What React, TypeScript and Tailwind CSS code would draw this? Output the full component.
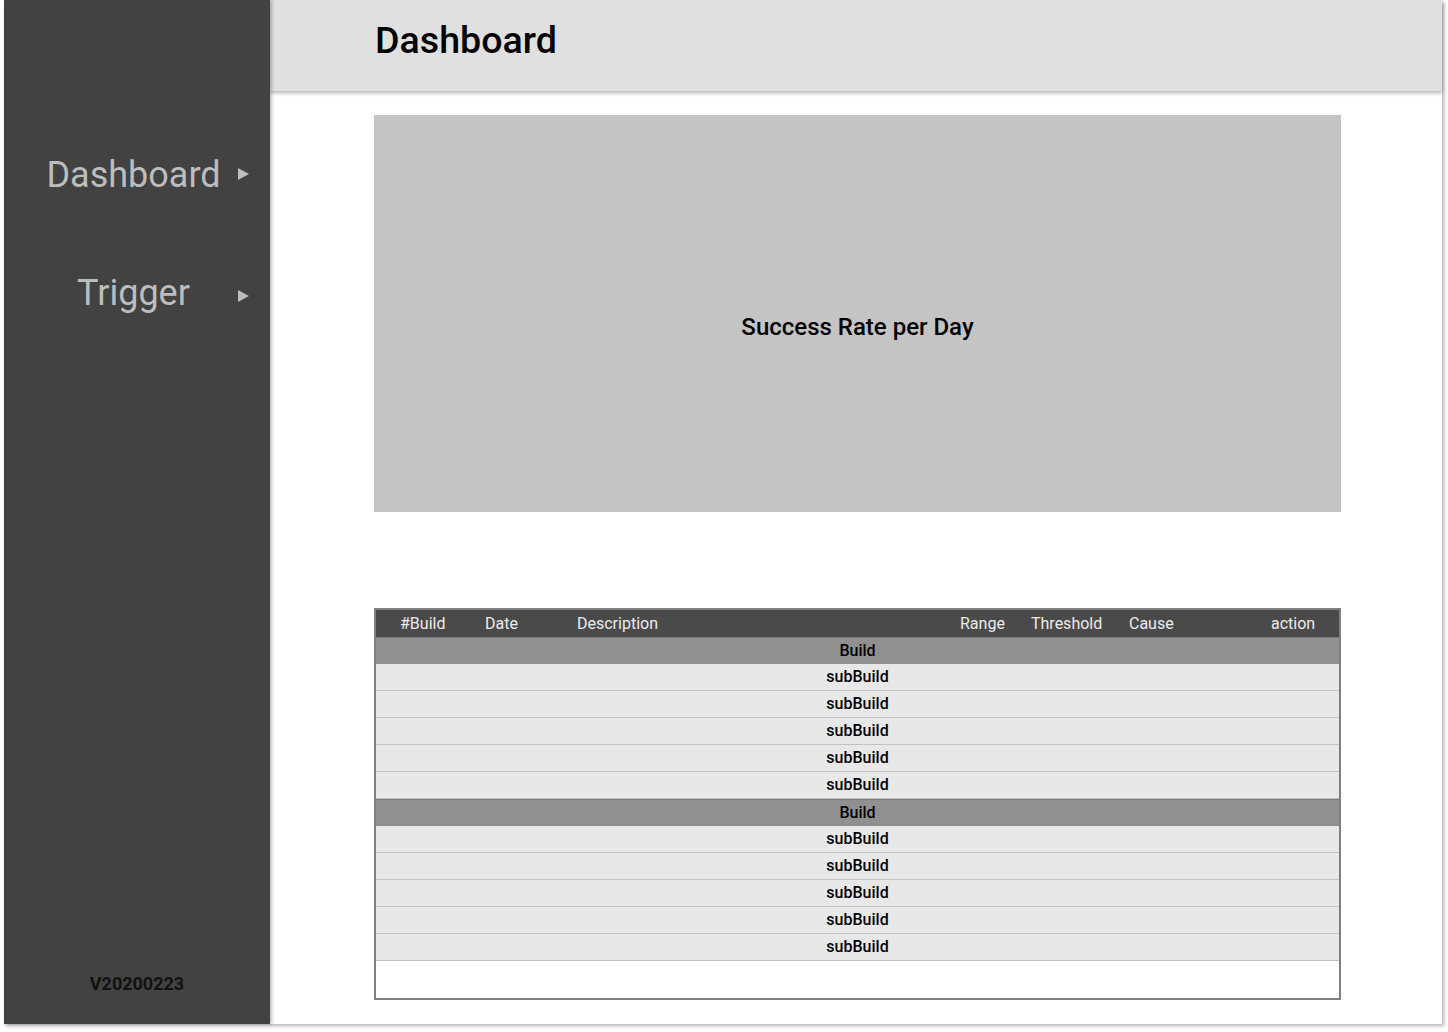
import React from "react";

const Arrow = ({ className = "" }: { className?: string }) => (
  <svg width="11" height="12" viewBox="0 0 11 12" className={className}>
    <polygon points="0,0 11,6 0,12" fill="#bdbdbd" />
  </svg>
);

const rows: { type: "build" | "sub" }[] = [
  { type: "build" },
  { type: "sub" },
  { type: "sub" },
  { type: "sub" },
  { type: "sub" },
  { type: "sub" },
  { type: "build" },
  { type: "sub" },
  { type: "sub" },
  { type: "sub" },
  { type: "sub" },
  { type: "sub" },
];

export default function App() {
  return (
    <div
      className="w-[1448px] h-[1032px] bg-white overflow-hidden"
      style={{ fontFamily: "Roboto, 'Noto Sans', sans-serif" }}
    >
      <div className="ml-[4px] w-[1438px] h-[1024px] flex bg-white shadow-[2px_2px_4px_rgba(0,0,0,0.3)]">
        {/* Sidebar */}
        <aside className="relative z-10 w-[266px] h-full bg-[#424242] flex flex-col shadow-[2px_0_3px_rgba(0,0,0,0.25)]">
          <div className="pt-[150px] flex flex-col">
            <div className="flex items-center h-[50px]">
              <span className="ml-[25px] w-[209px] text-center text-[36px] leading-none text-[#bdbdbd]">
                Dashboard
              </span>
              <Arrow className="mt-[-2px]" />
            </div>
            <div className="flex items-center h-[50px] mt-[68px]">
              <span className="ml-[25px] w-[209px] text-center text-[36px] leading-none text-[#bdbdbd]">
                Trigger
              </span>
              <Arrow className="mt-[6px]" />
            </div>
          </div>
          <div className="mt-auto pb-[27px] text-center">
            <span className="text-[18px] font-bold text-[#111111]">V20200223</span>
          </div>
        </aside>

        {/* Main */}
        <main className="flex-1 flex flex-col">
          <header className="relative h-[91px] bg-[#e0e0e0] flex items-center pl-[105px] shadow-[0_2px_4px_rgba(0,0,0,0.3)]">
            <h1 className="text-[37.6px] font-medium text-black leading-none mt-[-10px]">Dashboard</h1>
          </header>
          <div className="pl-[104px] pt-[24px]">
            <div className="w-[967px] h-[397px] bg-[#c4c4c4] flex items-center justify-center pt-[27px]">
              <span className="text-[24px] font-medium text-black">Success Rate per Day</span>
            </div>

            <div className="mt-[96px] w-[967px] h-[392px] border-2 border-[#808080] bg-white flex flex-col">
              <div className="h-[27px] bg-[#4a4a4a] flex items-center text-[16px] text-[#ececec] pl-[24px]">
                <span className="w-[85px]">#Build</span>
                <span className="w-[92px]">Date</span>
                <span className="w-[383px]">Description</span>
                <span className="w-[71px]">Range</span>
                <span className="w-[98px]">Threshold</span>
                <span className="w-[142px]">Cause</span>
                <span>action</span>
              </div>
              {rows.map((r, i) =>
                r.type === "build" ? (
                  <div
                    key={i}
                    className="h-[27px] bg-[#909090] border-t border-[#7a7a7a] flex items-center justify-center text-[16px] font-medium text-black"
                  >
                    Build
                  </div>
                ) : (
                  <div
                    key={i}
                    className="h-[27px] bg-[#e8e8e8] border-b border-[#c2c2c2] flex items-center justify-center text-[16px] font-medium text-black"
                  >
                    subBuild
                  </div>
                )
              )}
            </div>
          </div>
        </main>
      </div>
    </div>
  );
}
